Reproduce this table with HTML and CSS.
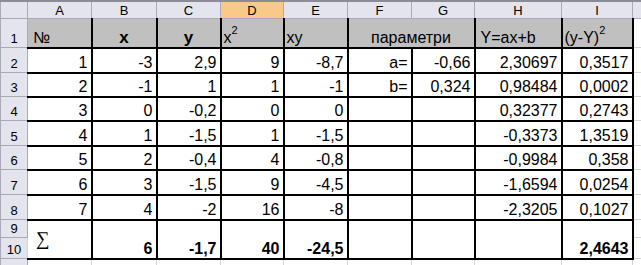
FILE: index.html
```html
<!DOCTYPE html>
<html>
<head>
<meta charset="utf-8">
<title>Sheet</title>
<link rel="stylesheet" href="styles.css">
</head>
<body>
<table class="sheet">
  <colgroup>
    <col class="w-rh"><col class="w-a"><col class="w-b"><col class="w-c"><col class="w-d"><col class="w-e"><col class="w-f"><col class="w-g"><col class="w-h"><col class="w-i"><col class="w-j">
  </colgroup>
  <tr class="hdr">
    <th class="col"></th><th class="col">A</th><th class="col">B</th><th class="col">C</th><th class="col sel">D</th><th class="col">E</th><th class="col">F</th><th class="col">G</th><th class="col">H</th><th class="col">I</th><th class="col"></th>
  </tr>
  <tr class="r1">
    <th class="row">1</th>
    <td class="c t l">№</td>
    <td class="c t m bold big">x</td>
    <td class="c t m bold big">y</td>
    <td class="c t l2">x<sup>2</sup></td>
    <td class="c t l2">xy</td>
    <td class="c t m" colspan="2">параметри</td>
    <td class="c t l">Y=ax+b</td>
    <td class="c t l2">(y-Y)<sup>2</sup></td>
    <td class="g"></td>
  </tr>
  <tr class="r2">
    <th class="row">2</th>
    <td class="c">1</td><td class="c">-3</td><td class="c">2,9</td><td class="c">9</td><td class="c">-8,7</td><td class="c">a=</td><td class="c">-0,66</td><td class="c">2,30697</td><td class="c">0,3517</td><td class="g"></td>
  </tr>
  <tr class="r3">
    <th class="row">3</th>
    <td class="c">2</td><td class="c">-1</td><td class="c">1</td><td class="c">1</td><td class="c">-1</td><td class="c">b=</td><td class="c">0,324</td><td class="c">0,98484</td><td class="c">0,0002</td><td class="g"></td>
  </tr>
  <tr class="r4">
    <th class="row">4</th>
    <td class="c">3</td><td class="c">0</td><td class="c">-0,2</td><td class="c">0</td><td class="c">0</td><td class="c"></td><td class="c"></td><td class="c">0,32377</td><td class="c">0,2743</td><td class="g"></td>
  </tr>
  <tr class="r5">
    <th class="row">5</th>
    <td class="c">4</td><td class="c">1</td><td class="c">-1,5</td><td class="c">1</td><td class="c">-1,5</td><td class="c"></td><td class="c"></td><td class="c">-0,3373</td><td class="c">1,3519</td><td class="g"></td>
  </tr>
  <tr class="r6">
    <th class="row">6</th>
    <td class="c">5</td><td class="c">2</td><td class="c">-0,4</td><td class="c">4</td><td class="c">-0,8</td><td class="c"></td><td class="c"></td><td class="c">-0,9984</td><td class="c">0,358</td><td class="g"></td>
  </tr>
  <tr class="r7">
    <th class="row">7</th>
    <td class="c">6</td><td class="c">3</td><td class="c">-1,5</td><td class="c">9</td><td class="c">-4,5</td><td class="c"></td><td class="c"></td><td class="c">-1,6594</td><td class="c">0,0254</td><td class="g"></td>
  </tr>
  <tr class="r8">
    <th class="row">8</th>
    <td class="c">7</td><td class="c">4</td><td class="c">-2</td><td class="c">16</td><td class="c">-8</td><td class="c"></td><td class="c"></td><td class="c">-2,3205</td><td class="c">0,1027</td><td class="g"></td>
  </tr>
  <tr class="r9">
    <th class="row">9</th>
    <td class="c sigma" rowspan="2">∑</td>
    <td class="c bold" rowspan="2">6</td>
    <td class="c bold" rowspan="2">-1,7</td>
    <td class="c bold" rowspan="2">40</td>
    <td class="c bold" rowspan="2">-24,5</td>
    <td class="c" rowspan="2"></td>
    <td class="c" rowspan="2"></td>
    <td class="c" rowspan="2"></td>
    <td class="c bold" rowspan="2">2,4643</td>
    <td class="g"></td>
  </tr>
  <tr class="r10">
    <th class="row">10</th>
    <td class="g"></td>
  </tr>
  <tr class="r11">
    <th class="row">11</th>
    <td class="g"></td><td class="g"></td><td class="g"></td><td class="g"></td><td class="g"></td><td class="g"></td><td class="g"></td><td class="g"></td><td class="g"></td><td class="g"></td>
  </tr>
</table>
</body>
</html>
```

FILE: styles.css
```css
html, body {
  margin: 0;
  padding: 0;
  background: #ffffff;
}

body {
  width: 641px;
  height: 265px;
  overflow: hidden;
}

.sheet {
  border-collapse: collapse;
  table-layout: fixed;
  width: 641px;
  font-family: "Liberation Sans", Arial, sans-serif;
  color: #000;
}

.w-rh { width: 27px; }
.w-a { width: 64px; }
.w-b { width: 65px; }
.w-c { width: 64px; }
.w-d { width: 63px; }
.w-e { width: 64px; }
.w-f { width: 64px; }
.w-g { width: 63px; }
.w-h { width: 87px; }
.w-i { width: 71px; }
.w-j { width: 9px; }

.sheet th.col {
  height: 16px;
  padding: 0;
  background: #e4e4ec;
  border: 1px solid #a9a9b8;
  border-top: 2px solid #8c8c98;
  font-weight: normal;
  font-size: 13px;
  line-height: 15px;
  text-align: center;
  vertical-align: middle;
}

.sheet th.sel {
  background: #f8c987;
}

.sheet th.row {
  padding: 0 0 1px;
  background: #e4e4ec;
  border: 1px solid #a9a9b8;
  font-weight: normal;
  font-size: 13px;
  line-height: 15px;
  text-align: center;
  vertical-align: bottom;
}

.sheet td {
  padding: 0 3px 0 3px;
  font-size: 16px;
  line-height: 18px;
  vertical-align: bottom;
  white-space: nowrap;
  overflow: hidden;
  border: 1px solid #d4d4d4;
}

.sheet td.c {
  text-align: right;
  border-right: 2px solid #000;
  border-bottom: 2px solid #000;
}

.sheet td.t {
  background: #c0c0c0;
}

.sheet td.l { text-align: left; padding-left: 5px; }
.sheet td.l2 { text-align: left; padding-left: 2px; }
.sheet td.m { text-align: center; }
.sheet td.bold { font-weight: bold; }
.sheet td.big { font-size: 17px; }

.sheet td.sigma {
  text-align: left;
  vertical-align: middle;
  padding-left: 8px;
  font-family: "Liberation Serif", "Times New Roman", serif;
  font-size: 19px;
}

.sheet sup {
  font-size: 11px;
  line-height: 0;
  vertical-align: 9px;
}

.r1 { height: 29px; }
.r2 { height: 25px; }
.r3 { height: 24px; }
.r4 { height: 24px; }
.r5 { height: 25px; }
.r6 { height: 24px; }
.r7 { height: 25px; }
.r8 { height: 25px; }
.r9 { height: 18px; }
.r10 { height: 21px; }
.r11 { height: 20px; }
```
